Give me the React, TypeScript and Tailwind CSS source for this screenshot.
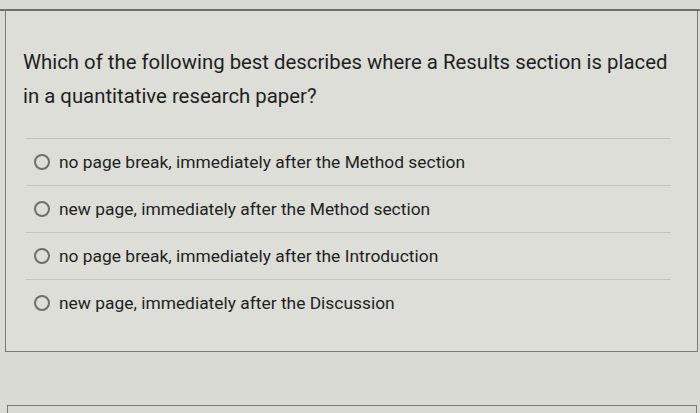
const options = [
  "no page break, immediately after the Method section",
  "new page, immediately after the Method section",
  "no page break, immediately after the Introduction",
  "new page, immediately after the Discussion",
];

export default function App() {
  return (
    <div className="w-[700px] h-[413px] overflow-hidden bg-[#d9dbd4] pt-[9px] font-['Roboto',sans-serif] text-[#1f1f1f]">
      <div className="h-[2px] bg-[#70716c]" />
      <div className="ml-[5px] w-[693px] h-[341px] border-x border-b border-[#7a7b76] bg-[#dcded7]">
        <div className="pl-[17px] pr-[20px] pt-[34px] pb-[25px] text-[20.35px] leading-[34px]">
          Which of the following best describes where a Results section is placed in a quantitative research paper?
        </div>
        <div className="ml-[20px] w-[645px]">
          {options.map((o, i) => (
            <div key={i} className="border-t border-[#c3c5be] h-[47px] flex items-center">
              <span className="ml-[8px] w-[16px] h-[16px] rounded-full border-2 border-[#6f706c] shrink-0" />
              <span className="ml-[9px] text-[17.4px]">{o}</span>
            </div>
          ))}
        </div>
      </div>
      <div className="mt-[53px] ml-[7px] w-[690px] h-[20px] border-t border-x border-[#7a7b76]" />
    </div>
  );
}
